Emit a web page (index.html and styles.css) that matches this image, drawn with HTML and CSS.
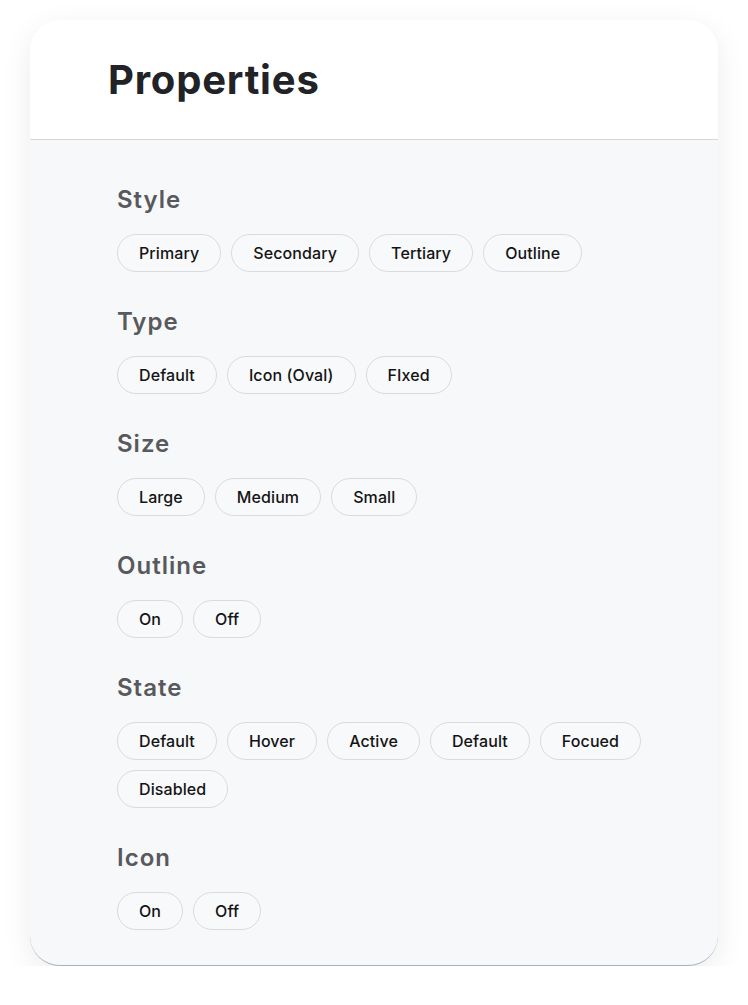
FILE: index.html
```html
<!DOCTYPE html>
<html lang="en">
<head>
<meta charset="utf-8">
<title>Properties</title>
<link rel="stylesheet" href="styles.css">
</head>
<body>
<div class="card">
  <header class="card-header">
    <h1 class="heading">Properties</h1>
  </header>
  <div class="card-body">
    <section class="group">
      <h2 class="group-title">Style</h2>
      <div class="chips">
        <span class="chip">Primary</span>
        <span class="chip">Secondary</span>
        <span class="chip">Tertiary</span>
        <span class="chip">Outline</span>
      </div>
    </section>
    <section class="group">
      <h2 class="group-title">Type</h2>
      <div class="chips">
        <span class="chip">Default</span>
        <span class="chip">Icon (Oval)</span>
        <span class="chip">FIxed</span>
      </div>
    </section>
    <section class="group">
      <h2 class="group-title">Size</h2>
      <div class="chips">
        <span class="chip">Large</span>
        <span class="chip">Medium</span>
        <span class="chip">Small</span>
      </div>
    </section>
    <section class="group">
      <h2 class="group-title">Outline</h2>
      <div class="chips">
        <span class="chip">On</span>
        <span class="chip">Off</span>
      </div>
    </section>
    <section class="group">
      <h2 class="group-title">State</h2>
      <div class="chips">
        <span class="chip">Default</span>
        <span class="chip">Hover</span>
        <span class="chip">Active</span>
        <span class="chip">Default</span>
        <span class="chip">Focued</span>
        <span class="chip">Disabled</span>
      </div>
    </section>
    <section class="group">
      <h2 class="group-title">Icon</h2>
      <div class="chips">
        <span class="chip">On</span>
        <span class="chip">Off</span>
      </div>
    </section>
  </div>
</div>
</body>
</html>
```
FILE: styles.css
```css
* { box-sizing: border-box; }

html, body {
  margin: 0;
  padding: 0;
  background: #ffffff;
}

body {
  padding: 20px 30px 0 30px;
  font-family: Inter, "Noto Sans", sans-serif;
}

.card {
  width: 688px;
  height: 946px;
  border-radius: 30px;
  background: #f7f8fa;
  border-bottom: 1px solid #aab1bc;
  box-shadow: 0 8px 30px rgba(0, 0, 0, 0.08);
  overflow: hidden;
  display: flex;
  flex-direction: column;
}

.card-header {
  height: 120px;
  flex: none;
  background: #ffffff;
  border-bottom: 1px solid #d8d8d8;
  display: flex;
  align-items: center;
  padding: 0 0 0 78px;
}

.heading {
  margin: 0;
  font-size: 40px;
  line-height: 48px;
  font-weight: 700;
  color: #212327;
  letter-spacing: 0.8px;
}

.card-body {
  padding: 44px 40px 0 87px;
  display: flex;
  flex-direction: column;
  gap: 34px;
}

.group-title {
  margin: 0 0 18px 0;
  font-size: 24px;
  line-height: 32px;
  font-weight: 600;
  color: #58595c;
  letter-spacing: 1px;
}

.chips {
  display: flex;
  flex-wrap: wrap;
  gap: 10px;
}

.chip {
  height: 38px;
  display: inline-flex;
  align-items: center;
  padding: 0 21px;
  border: 1px solid #dadbdd;
  border-radius: 19px;
  background: #f8f9fb;
  font-size: 16px;
  font-weight: 500;
  color: #141414;
  letter-spacing: 0.1px;
  white-space: nowrap;
}
```
